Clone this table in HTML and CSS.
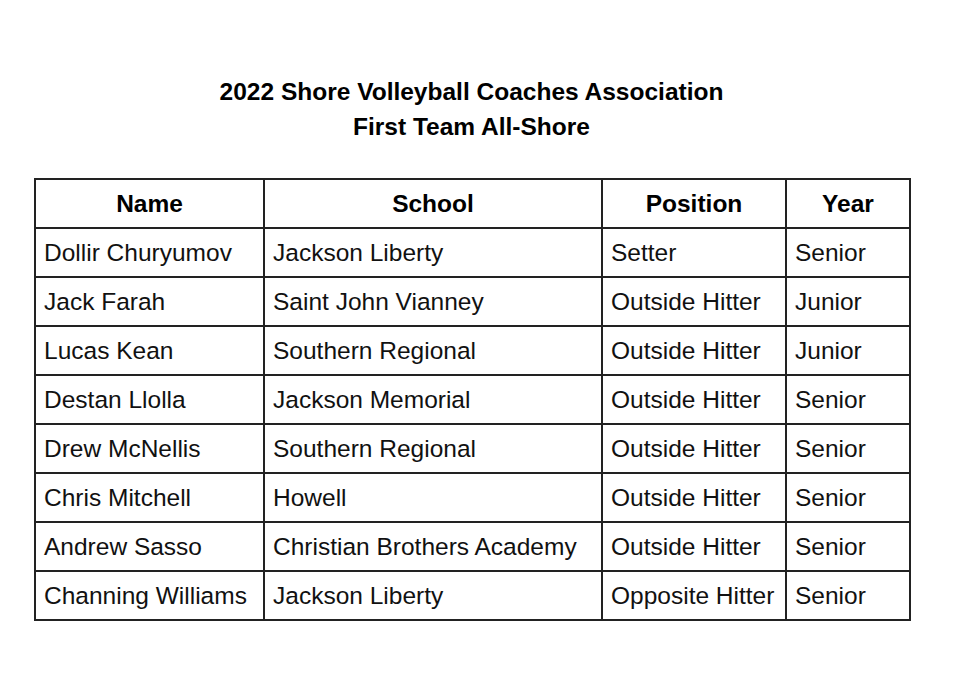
FILE: index.html
```html
<!DOCTYPE html>
<html>
<head>
<meta charset="utf-8">
<link rel="stylesheet" href="styles.css">
</head>
<body>
<div class="page">
  <h1 class="title">2022 Shore Volleyball Coaches Association<br>First Team All-Shore</h1>
  <table class="roster">
    <colgroup>
      <col class="c-name"><col class="c-school"><col class="c-pos"><col class="c-year">
    </colgroup>
    <thead>
      <tr><th>Name</th><th>School</th><th>Position</th><th>Year</th></tr>
    </thead>
    <tbody>
      <tr><td>Dollir Churyumov</td><td>Jackson Liberty</td><td>Setter</td><td>Senior</td></tr>
      <tr><td>Jack Farah</td><td>Saint John Vianney</td><td>Outside Hitter</td><td>Junior</td></tr>
      <tr><td>Lucas Kean</td><td>Southern Regional</td><td>Outside Hitter</td><td>Junior</td></tr>
      <tr><td>Destan Llolla</td><td>Jackson Memorial</td><td>Outside Hitter</td><td>Senior</td></tr>
      <tr><td>Drew McNellis</td><td>Southern Regional</td><td>Outside Hitter</td><td>Senior</td></tr>
      <tr><td>Chris Mitchell</td><td>Howell</td><td>Outside Hitter</td><td>Senior</td></tr>
      <tr><td>Andrew Sasso</td><td>Christian Brothers Academy</td><td>Outside Hitter</td><td>Senior</td></tr>
      <tr><td>Channing Williams</td><td>Jackson Liberty</td><td>Opposite Hitter</td><td>Senior</td></tr>
    </tbody>
  </table>
</div>
</body>
</html>
```
FILE: styles.css
```css
html, body {
  margin: 0;
  padding: 0;
  background: #ffffff;
}
body {
  font-family: "Liberation Sans", Arial, sans-serif;
  color: #111;
}
.page {
  width: 875px;
  margin-left: 34px;
  padding-top: 74px;
}
.title {
  margin: 0 0 34px 0;
  text-align: center;
  font-size: 24.5px;
  font-weight: bold;
  line-height: 35px;
  color: #000;
}
.roster {
  width: 875px;
  border-collapse: collapse;
  table-layout: fixed;
  font-size: 24.5px;
}
.c-name { width: 229px; }
.c-school { width: 338px; }
.c-pos { width: 184px; }
.c-year { width: 124px; }
.roster th, .roster td {
  border: 2px solid #222;
  height: 47px;
  padding: 0 8px;
  white-space: nowrap;
  overflow: hidden;
}
.roster th {
  text-align: center;
  font-weight: bold;
  color: #000;
}
.roster td {
  text-align: left;
  font-weight: normal;
  color: #111;
}
```
